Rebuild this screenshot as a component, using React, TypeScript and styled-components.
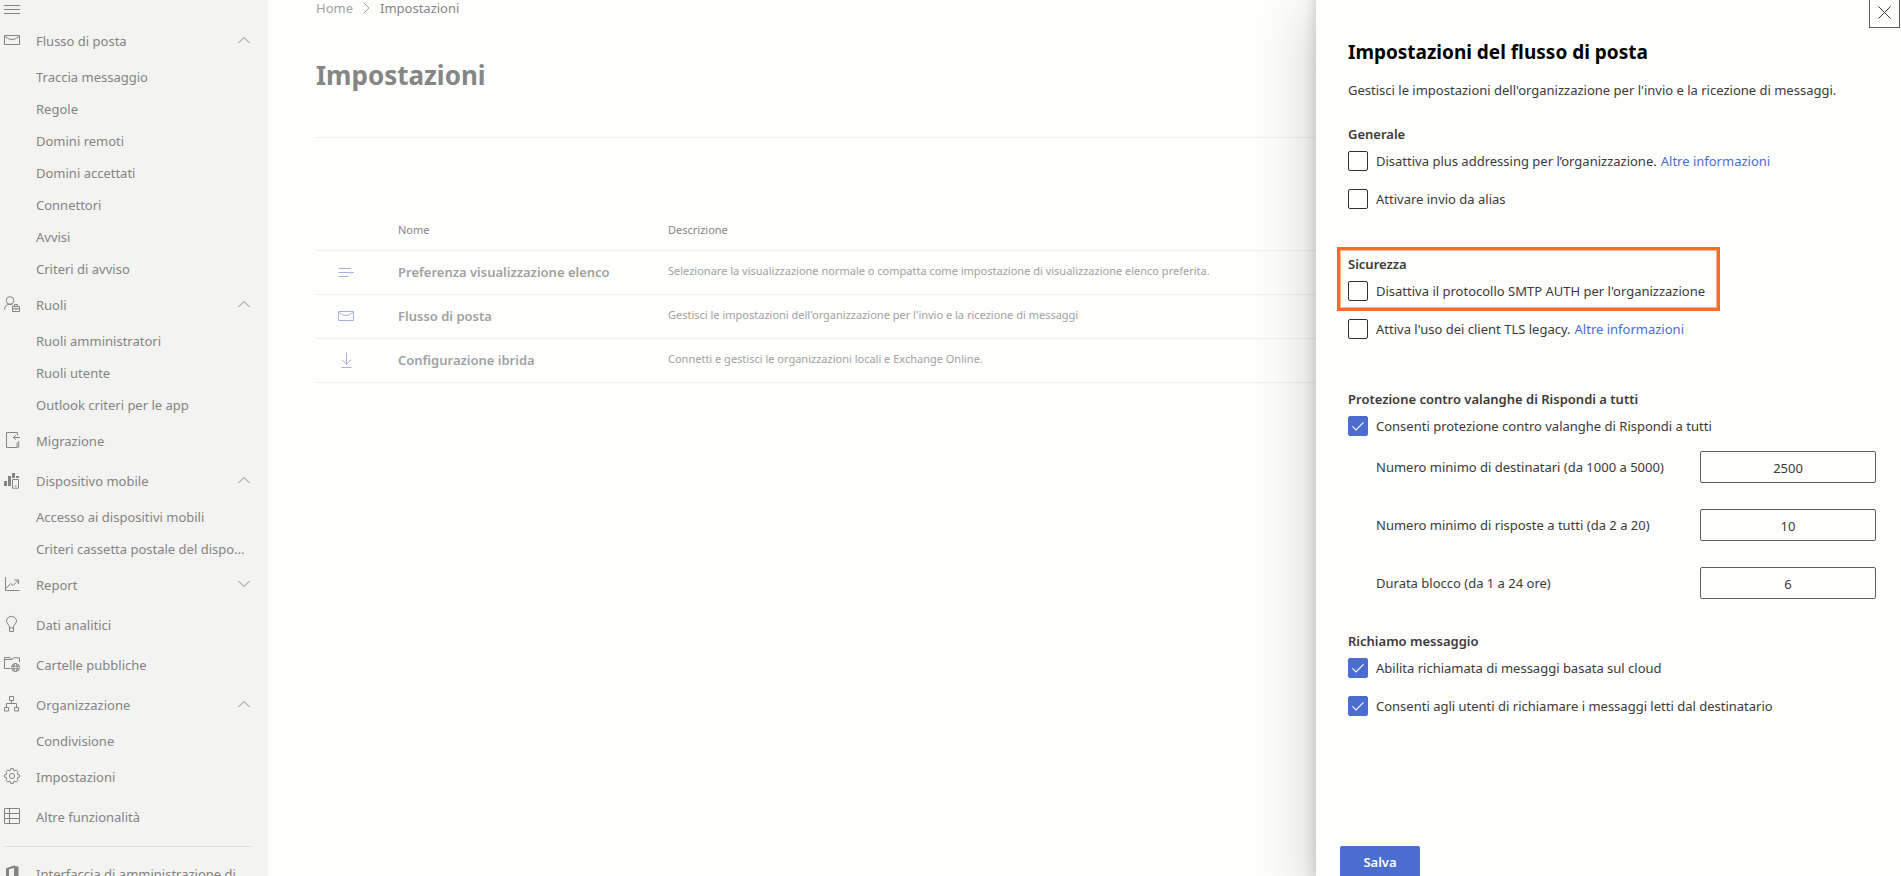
import React, { useState } from "react";
import styled, { createGlobalStyle } from "styled-components";

const color = {
  page: "#fefefd",
  nav: "#f3f3f2",
  navText: "#848482",
  muted: "#a0a2a1",
  faded: "#848685",
  line: "#f0f0ef",
  text: "#3b3a39",
  accent: "#4b6dd0",
  highlight: "#f36c28",
};

const GlobalStyle = createGlobalStyle`
  *, *::before, *::after { box-sizing: border-box; }
  body {
    margin: 0;
    background: ${color.page};
    font-family: "Noto Sans", "Open Sans", sans-serif;
    font-size: 13px;
    line-height: 20px;
    color: ${color.text};
  }
  button, input { font: inherit; color: inherit; }
  a { color: inherit; text-decoration: none; }
`;

/* ---------- icons ---------- */

type IconName =
  | "menu" | "mail" | "roles" | "migration" | "mobile" | "report" | "bulb"
  | "folder" | "org" | "gear" | "table" | "office" | "list" | "download";

const gearOutline = Array.from({ length: 8 }, (_, i) => {
  const p = (r: number, deg: number) => {
    const a = ((i * 45 + deg) * Math.PI) / 180;
    return `${(8 + r * Math.sin(a)).toFixed(2)} ${(8 - r * Math.cos(a)).toFixed(2)}`;
  };
  return `${i ? "L" : "M"}${p(7.5, -10)}L${p(7.5, 10)}L${p(5.8, 16)}L${p(5.8, 29)}`;
}).join("") + "Z";

const drawings: Record<IconName, React.ReactNode> = {
  menu: <path d="M0 3.5H16M0 7.5H16M0 11.5H16" />,
  mail: (
    <>
      <path d="M.5 3.5H15.5V12.5H.5Z" />
      <path d="M1 4.5Q8 10.5 15 4.5" />
    </>
  ),
  roles: (
    <>
      <circle cx="6" cy="4.5" r="3.8" />
      <path d="M.5 13.5Q.6 8.6 5.5 8.3Q7.5 8.3 8.8 9.5" />
      <path d="M8.5 10.5H15.5V15.5H8.5ZM10.5 10.5V8.5H13.5V10.5M8.5 12.8H15.5M12 12V14" />
    </>
  ),
  migration: (
    <>
      <path d="M13.5 3.5V.5H2.5V15.5H13.5" />
      <path d="M16 5.5H9.5M11.8 3.2L9.5 5.5L11.8 7.8" />
      <path d="M13 10.5V15.5M14.7 9V15.5" />
    </>
  ),
  mobile: (
    <>
      <path d="M0 9H3V14H0ZM4 4H7V14H4ZM8 1H11V6H8ZM12 4H15V6H12Z" fill="currentColor" stroke="none" />
      <path d="M8.5 7.5H14.5V16.2H8.5ZM10.5 14H12.5" />
    </>
  ),
  report: <path d="M1.5 1V14.5H15.5M2 12.5L6.5 7.5L9 9.5L14.5 4M10.5 4H14.5V8" />,
  bulb: (
    <path d="M5.5 12V11Q5.3 9.6 3.8 8Q2.5 6.6 2.5 5A5 4.6 0 0 1 12.5 5Q12.5 6.6 11.2 8Q9.7 9.6 9.5 11V15.5H5.5V12H9.5" />
  ),
  folder: (
    <>
      <path d="M6.5 12.5H.5V1.5H6L8 3.5H.5M8 3.5L9.5 1.8H15.5V6" />
      <circle cx="11.5" cy="11.5" r="4" />
      <ellipse cx="11.5" cy="11.5" rx="1.8" ry="4" />
      <path d="M7.8 10.2H15.2M7.8 12.8H15.2" />
    </>
  ),
  org: <path d="M5.5 .5H9.5V4.5H5.5ZM.5 11.5H4.5V15H.5ZM10.5 11.5H14.5V15H10.5ZM7.5 4.5V7.5M2.5 11.5V7.5H12.5V11.5" />,
  gear: (
    <>
      <path d={gearOutline} strokeLinejoin="round" />
      <circle cx="8" cy="8" r="2.6" />
    </>
  ),
  table: <path d="M.5 .5H15.5V15.5H.5ZM5.5 .5V15.5M.5 5.5H15.5M.5 10.5H15.5" />,
  office: (
    <path
      d="M2 3.2L10 .5L14.5 1.8V14.2L10 15.5L2 12.6L10 13.6V3L5 4.2V11.4L2 12.6Z"
      fill="currentColor"
      stroke="none"
    />
  ),
  list: <path d="M.5 4.5H13M.5 8.5H16M.5 12.5H10.5" />,
  download: <path d="M8.5 .5V12M3.8 7.8L8.5 12.3L13.2 7.8M3.5 15.5H13.5" />,
};

const IconSvg = styled.svg`
  display: block;
  flex: none;
  width: 16px;
  height: 16px;
  fill: none;
  stroke: currentColor;
  stroke-width: 1;
  overflow: visible;
`;

const Icon = ({ name }: { name: IconName }) => (
  <IconSvg viewBox="0 0 16 16" aria-hidden="true">{drawings[name]}</IconSvg>
);

/* ---------- shell ---------- */

const Shell = styled.div`
  display: grid;
  grid-template-columns: 268px minmax(0, 1fr);
  height: 100vh;
  overflow: hidden;
`;

const Sidebar = styled.nav`
  min-height: 0;
  overflow: hidden;
  padding: 0 16px 0 4px;
  background: ${color.nav};
  color: ${color.navText};
`;

const MenuButton = styled.button`
  display: flex;
  align-items: center;
  height: 21px;
  padding: 0 0 2px;
  border: 0;
  background: none;
`;

const NavGroupButton = styled.button`
  display: flex;
  align-items: center;
  gap: 16px;
  width: 100%;
  height: 40px;
  padding: 0 2px 0 0;
  border: 0;
  background: none;
  text-align: left;

  svg {
    margin-bottom: 2px;
  }
`;

const NavTopLink = styled.a`
  display: flex;
  align-items: center;
  gap: 16px;
  height: 40px;

  svg {
    margin-bottom: 2px;
  }
`;

const NavLabel = styled.span`
  flex: 1;
  min-width: 0;
  overflow: hidden;
  white-space: nowrap;
  text-overflow: ellipsis;
`;

const NavSubLink = styled.a`
  display: block;
  height: 32px;
  padding: 0 4px 0 32px;
  line-height: 32px;
  overflow: hidden;
  white-space: nowrap;
  text-overflow: ellipsis;
`;

const NavDivider = styled.hr`
  height: 1px;
  margin: 9px 0 7px;
  border: 0;
  background: #dededd;
`;

const ChevronSvg = styled.svg<{ $open: boolean }>`
  flex: none;
  width: 12px;
  height: 8px;
  fill: none;
  stroke: currentColor;
  transform: ${(p) => (p.$open ? "none" : "rotate(180deg)")};
`;

interface NavEntry {
  label: string;
  icon: IconName;
  open?: boolean;
  children?: string[];
}

const navEntries: NavEntry[] = [
  {
    label: "Flusso di posta", icon: "mail", open: true,
    children: ["Traccia messaggio", "Regole", "Domini remoti", "Domini accettati", "Connettori", "Avvisi", "Criteri di avviso"],
  },
  { label: "Ruoli", icon: "roles", open: true, children: ["Ruoli amministratori", "Ruoli utente", "Outlook criteri per le app"] },
  { label: "Migrazione", icon: "migration" },
  {
    label: "Dispositivo mobile", icon: "mobile", open: true,
    children: ["Accesso ai dispositivi mobili", "Criteri cassetta postale del dispo..."],
  },
  { label: "Report", icon: "report", open: false, children: [] },
  { label: "Dati analitici", icon: "bulb" },
  { label: "Cartelle pubbliche", icon: "folder" },
  { label: "Organizzazione", icon: "org", open: true, children: ["Condivisione"] },
  { label: "Impostazioni", icon: "gear" },
  { label: "Altre funzionalità", icon: "table" },
];

function NavSection({ entry }: { entry: NavEntry }) {
  const [open, setOpen] = useState(!!entry.open);
  if (!entry.children) {
    return (
      <NavTopLink href="#">
        <Icon name={entry.icon} />
        <NavLabel>{entry.label}</NavLabel>
      </NavTopLink>
    );
  }
  return (
    <>
      <NavGroupButton type="button" aria-expanded={open} onClick={() => setOpen(!open)}>
        <Icon name={entry.icon} />
        <NavLabel>{entry.label}</NavLabel>
        <ChevronSvg $open={open} viewBox="0 0 12 8" aria-hidden="true">
          <path d="M.5 7L6 1.5L11.5 7" />
        </ChevronSvg>
      </NavGroupButton>
      {open && entry.children.map((c) => <NavSubLink key={c} href="#">{c}</NavSubLink>)}
    </>
  );
}

/* ---------- main content ---------- */

const Main = styled.main`
  min-width: 0;
  padding: 0 48px;
`;

const Breadcrumb = styled.nav`
  display: flex;
  align-items: center;
  gap: 10px;
  height: 16px;
  color: ${color.faded};
`;

const HomeLink = styled.a`
  color: ${color.muted};
`;

const CrumbArrow = styled.svg`
  width: 7px;
  height: 12px;
  fill: none;
  stroke: ${color.muted};
`;

const PageTitle = styled.h1`
  margin: 40px 0 0;
  padding-bottom: 43px;
  border-bottom: 1px solid ${color.line};
  font-size: 26px;
  line-height: 38px;
  font-weight: 700;
  color: ${color.faded};
`;

const SettingsTable = styled.table`
  width: 100%;
  margin-top: 70px;
  border-collapse: collapse;
  table-layout: fixed;
`;

const HeadCell = styled.th<{ $width?: number }>`
  width: ${(p) => (p.$width ? `${p.$width}px` : "auto")};
  height: 42px;
  padding: 2px 0 0;
  border-bottom: 1px solid ${color.line};
  text-align: left;
  font-size: 11px;
  font-weight: 400;
  color: ${color.faded};
`;

const Cell = styled.td`
  height: 44px;
  padding: 0 0 2px;
  border-bottom: 1px solid ${color.line};
  font-size: 11px;
  color: ${color.muted};
`;

const IconCell = styled(Cell)`
  padding: 0 0 0 22px;
  color: #a9b0de;
`;

const NameCell = styled(Cell)`
  padding: 0;
  font-size: 13px;
  font-weight: 600;
`;

const settings: { icon: IconName; name: string; description: string }[] = [
  {
    icon: "list", name: "Preferenza visualizzazione elenco",
    description: "Selezionare la visualizzazione normale o compatta come impostazione di visualizzazione elenco preferita.",
  },
  {
    icon: "mail", name: "Flusso di posta",
    description: "Gestisci le impostazioni dell'organizzazione per l'invio e la ricezione di messaggi",
  },
  {
    icon: "download", name: "Configurazione ibrida",
    description: "Connetti e gestisci le organizzazioni locali e Exchange Online.",
  },
];

/* ---------- side panel ---------- */

const Panel = styled.aside`
  position: fixed;
  top: 0;
  right: 0;
  bottom: 0;
  display: flex;
  flex-direction: column;
  width: 585px;
  overflow: hidden;
  background: ${color.page};
`;

const PanelShadow = styled.div`
  position: fixed;
  top: -16px;
  right: 0;
  bottom: 0;
  width: 585px;
  box-shadow: 0 26px 58px rgba(0, 0, 0, 0.22), 0 5px 14px rgba(0, 0, 0, 0.18);
`;

const CloseButton = styled.button`
  display: grid;
  place-items: center;
  align-self: flex-end;
  width: 31px;
  height: 32px;
  margin: -4px 1px 0 0;
  padding: 1px 0 0;
  border: 1px solid #605e5c;
  background: none;
`;

const CloseSvg = styled.svg`
  width: 13px;
  height: 13px;
  fill: none;
  stroke: ${color.text};
`;

const PanelBody = styled.form`
  flex: 1;
  display: flex;
  flex-direction: column;
  padding: 10px 24px 0 32px;
`;

const PanelTitle = styled.h2`
  margin: 0;
  font-size: 19px;
  line-height: 28px;
  font-weight: 700;
  color: #000;
`;

const PanelIntro = styled.p`
  margin: 14px 0 0;
`;

const Group = styled.section<{ $top: number }>`
  margin-top: ${(p) => p.$top}px;
`;

const GroupTitle = styled.h3`
  margin: 0 0 7px;
  font-size: 13px;
  line-height: 20px;
  font-weight: 600;
`;

const CheckRow = styled.div<{ $spaced?: boolean }>`
  display: flex;
  align-items: center;
  gap: 8px;
  height: 20px;
  margin-top: ${(p) => (p.$spaced ? 18 : 0)}px;
  white-space: nowrap;
`;

const CheckMark = styled.span`
  display: grid;
  flex: none;

  > * {
    grid-area: 1 / 1;
  }
`;

const CheckInput = styled.input`
  appearance: none;
  width: 20px;
  height: 20px;
  margin: 0;
  border: 1px solid #323130;
  border-radius: 2px;
  background: transparent;

  &:checked {
    border-color: ${color.accent};
    background: ${color.accent};
  }
  &:not(:checked) + svg {
    visibility: hidden;
  }
`;

const TickSvg = styled.svg`
  width: 20px;
  height: 20px;
  fill: none;
  stroke: #fff;
  stroke-width: 1.2;
  pointer-events: none;
`;

const InfoLink = styled.a`
  margin-left: -4px;
  color: ${color.accent};
`;

const Highlighted = styled.div`
  position: relative;
  width: fit-content;

  &::after {
    content: "";
    position: absolute;
    inset: -7px -15px -10px -11px;
    border: 3px solid ${color.highlight};
    box-shadow: inset 0 0 0 1px #f9b491;
    pointer-events: none;
  }
`;

const FieldList = styled.div`
  display: flex;
  flex-direction: column;
  gap: 26px;
  margin: 15px 1px 0 28px;
`;

const Field = styled.div`
  display: flex;
  align-items: center;
  justify-content: space-between;
`;

const FieldInput = styled.input`
  width: 176px;
  height: 32px;
  padding: 2px 8px 0;
  border: 1px solid #605e5c;
  border-radius: 2px;
  background: transparent;
  text-align: center;
`;

const PanelFooter = styled.footer`
  flex: none;
  height: 30px;
  padding-left: 24px;
`;

const SaveButton = styled.button`
  width: 80px;
  height: 32px;
  padding: 0;
  border: 0;
  border-radius: 2px;
  background: ${color.accent};
  color: #fff;
  font-weight: 600;
`;

interface CheckProps {
  id: string;
  label: string;
  checked?: boolean;
  info?: boolean;
  spaced?: boolean;
}

const Check = ({ id, label, checked, info, spaced }: CheckProps) => (
  <CheckRow $spaced={spaced}>
    <CheckMark>
      <CheckInput type="checkbox" id={id} defaultChecked={checked} />
      <TickSvg viewBox="0 0 20 20" aria-hidden="true">
        <path d="M4.5 10.3L8 13.8L15.5 6.3" />
      </TickSvg>
    </CheckMark>
    <label htmlFor={id}>{label}</label>
    {info && <InfoLink href="#">Altre informazioni</InfoLink>}
  </CheckRow>
);

const fields = [
  { id: "recipients", label: "Numero minimo di destinatari (da 1000 a 5000)", value: "2500" },
  { id: "replies", label: "Numero minimo di risposte a tutti (da 2 a 20)", value: "10" },
  { id: "duration", label: "Durata blocco (da 1 a 24 ore)", value: "6" },
];

export default function App() {
  return (
    <>
      <GlobalStyle />
      <Shell>
        <Sidebar>
          <MenuButton type="button" aria-label="Menu">
            <Icon name="menu" />
          </MenuButton>
          {navEntries.map((e) => <NavSection key={e.label} entry={e} />)}
          <NavDivider />
          <NavTopLink href="#">
            <Icon name="office" />
            <NavLabel>Interfaccia di amministrazione di</NavLabel>
          </NavTopLink>
        </Sidebar>

        <Main>
          <Breadcrumb>
            <HomeLink href="#">Home</HomeLink>
            <CrumbArrow viewBox="0 0 7 12" aria-hidden="true">
              <path d="M.8 .8L6 6L.8 11.2" />
            </CrumbArrow>
            <span>Impostazioni</span>
          </Breadcrumb>
          <PageTitle>Impostazioni</PageTitle>
          <SettingsTable>
            <thead>
              <tr>
                <HeadCell $width={82} aria-label="Icona" />
                <HeadCell $width={270}>Nome</HeadCell>
                <HeadCell>Descrizione</HeadCell>
              </tr>
            </thead>
            <tbody>
              {settings.map((s) => (
                <tr key={s.name}>
                  <IconCell><Icon name={s.icon} /></IconCell>
                  <NameCell>{s.name}</NameCell>
                  <Cell>{s.description}</Cell>
                </tr>
              ))}
            </tbody>
          </SettingsTable>
        </Main>
      </Shell>

      <PanelShadow />
      <Panel aria-labelledby="panel-title">
        <CloseButton type="button" aria-label="Chiudi">
          <CloseSvg viewBox="0 0 13 13" aria-hidden="true">
            <path d="M.5 .5L12.5 12.5M12.5 .5L.5 12.5" />
          </CloseSvg>
        </CloseButton>
        <PanelBody id="panel-form">
          <PanelTitle id="panel-title">Impostazioni del flusso di posta</PanelTitle>
          <PanelIntro>
            Gestisci le impostazioni dell'organizzazione per l'invio e la ricezione di messaggi.
          </PanelIntro>

          <Group $top={24}>
            <GroupTitle>Generale</GroupTitle>
            <Check id="plus" label="Disattiva plus addressing per l’organizzazione." info />
            <Check id="alias" label="Attivare invio da alias" spaced />
          </Group>

          <Group $top={45}>
            <Highlighted>
              <GroupTitle>Sicurezza</GroupTitle>
              <Check id="smtp" label="Disattiva il protocollo SMTP AUTH per l'organizzazione" />
            </Highlighted>
            <Check id="tls" label="Attiva l'uso dei client TLS legacy." info spaced />
          </Group>

          <Group $top={50}>
            <GroupTitle>Protezione contro valanghe di Rispondi a tutti</GroupTitle>
            <Check id="storm" label="Consenti protezione contro valanghe di Rispondi a tutti" checked />
            <FieldList>
              {fields.map((f) => (
                <Field key={f.id}>
                  <label htmlFor={f.id}>{f.label}</label>
                  <FieldInput id={f.id} type="text" inputMode="numeric" defaultValue={f.value} />
                </Field>
              ))}
            </FieldList>
          </Group>

          <Group $top={32}>
            <GroupTitle>Richiamo messaggio</GroupTitle>
            <Check id="cloud" label="Abilita richiamata di messaggi basata sul cloud" checked />
            <Check id="read" label="Consenti agli utenti di richiamare i messaggi letti dal destinatario" checked spaced />
          </Group>
        </PanelBody>
        <PanelFooter>
          <SaveButton type="submit" form="panel-form">Salva</SaveButton>
        </PanelFooter>
      </Panel>
    </>
  );
}
